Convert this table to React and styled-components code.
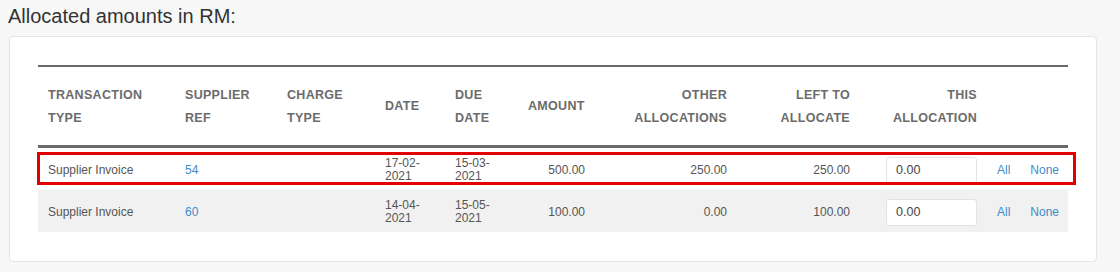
import React from "react";
import styled, { createGlobalStyle } from "styled-components";

const GlobalStyle = createGlobalStyle`
	html, body {
		margin: 0;
		padding: 0;
		background-color: #f7f7f7;
		font-family: "Liberation Sans", Arial, sans-serif;
	}
`;

const Page = styled.div`
	width: 1120px;
	height: 272px;
	padding: 5px 23px 0 9px;
	box-sizing: border-box;
	overflow: hidden;
`;

const Title = styled.h3`
	margin: 0 0 8px -1px;
	font-size: 20px;
	line-height: 23px;
	font-weight: normal;
	color: #333;
`;

const Panel = styled.div`
	background-color: #fff;
	border: 1px solid #e4e4e4;
	border-radius: 4px;
	padding: 28px 28px 29px 28px;
`;

const TableWrap = styled.div`
	position: relative;
`;

const Table = styled.table`
	width: 1030px;
	table-layout: fixed;
	border-collapse: separate;
	border-spacing: 0;
`;

const HeadRow = styled.tr`
	height: 83px;
`;

const Th = styled.th`
	padding: 1px 10px 0;
	border-top: 2px solid #6a6a6a;
	border-bottom: 3px solid #6a6a6a;
	font-size: 12.5px;
	line-height: 23px;
	letter-spacing: 0.3px;
	font-weight: bold;
	color: #6b6b6b;
	text-transform: uppercase;
	vertical-align: middle;
	text-align: ${(props) => (props.$right ? "right" : "left")};
`;

const Row = styled.tr`
	height: 42px;
	background-color: ${(props) => (props.$striped ? "#f1f1f1" : "#fff")};
`;

const Td = styled.td`
	padding: 2px 10px 0;
	font-size: 12px;
	line-height: 13px;
	color: #555;
	vertical-align: middle;
	text-align: ${(props) => (props.$right ? "right" : "left")};
`;

const RefLink = styled.a`
	color: #428bca;
	text-decoration: none;
	font-size: 12px;
`;

const QuickLink = styled.a`
	color: #428bca;
	text-decoration: none;
	font-size: 12px;
	margin-right: ${(props) => (props.$gap ? "20px" : "0")};
`;

const AmountInput = styled.input`
	width: 91px;
	height: 27px;
	box-sizing: border-box;
	border: 1px solid #e3e3e3;
	border-radius: 3px;
	padding: 0 9px;
	font-family: "Liberation Sans", Arial, sans-serif;
	font-size: 12.5px;
	color: #444;
	background: #fff;
	vertical-align: middle;
`;

const Highlight = styled.div`
	position: absolute;
	left: -1px;
	top: 87px;
	width: 1039px;
	height: 33px;
	box-sizing: border-box;
	border: 3px solid #e30000;
	pointer-events: none;
`;

const columns = [137, 102, 98, 70, 73, 77, 142, 123, 127, 81];

const rows = [
	{ type: "Supplier Invoice", ref: "54", date: "17-02-2021", due: "15-03-2021", amount: "500.00", other: "250.00", left: "250.00" },
	{ type: "Supplier Invoice", ref: "60", date: "14-04-2021", due: "15-05-2021", amount: "100.00", other: "0.00", left: "100.00" },
];

function App() {
	return (
		<>
			<GlobalStyle />
			<Page>
				<Title>Allocated amounts in RM:</Title>
				<Panel>
					<TableWrap>
						<Table>
							<colgroup>
								{columns.map((w, i) => (
									<col key={i} style={{ width: w }} />
								))}
							</colgroup>
							<thead>
								<HeadRow>
									<Th>Transaction<br />Type</Th>
									<Th>Supplier<br />Ref</Th>
									<Th>Charge<br />Type</Th>
									<Th>Date</Th>
									<Th>Due<br />Date</Th>
									<Th>Amount</Th>
									<Th $right>Other<br />Allocations</Th>
									<Th $right>Left to<br />Allocate</Th>
									<Th $right>This<br />Allocation</Th>
									<Th></Th>
								</HeadRow>
							</thead>
							<tbody>
								{rows.map((r, i) => (
									<Row key={r.ref} $striped={i % 2 === 1}>
										<Td>{r.type}</Td>
										<Td>
											<RefLink href="#">{r.ref}</RefLink>
										</Td>
										<Td></Td>
										<Td>{r.date}</Td>
										<Td>{r.due}</Td>
										<Td $right>{r.amount}</Td>
										<Td $right>{r.other}</Td>
										<Td $right>{r.left}</Td>
										<Td $right>
											<AmountInput defaultValue="0.00" />
										</Td>
										<Td>
											<QuickLink href="#" $gap>All</QuickLink>
											<QuickLink href="#">None</QuickLink>
										</Td>
									</Row>
								))}
							</tbody>
						</Table>
						<Highlight />
					</TableWrap>
				</Panel>
			</Page>
		</>
	);
}

export default App;
